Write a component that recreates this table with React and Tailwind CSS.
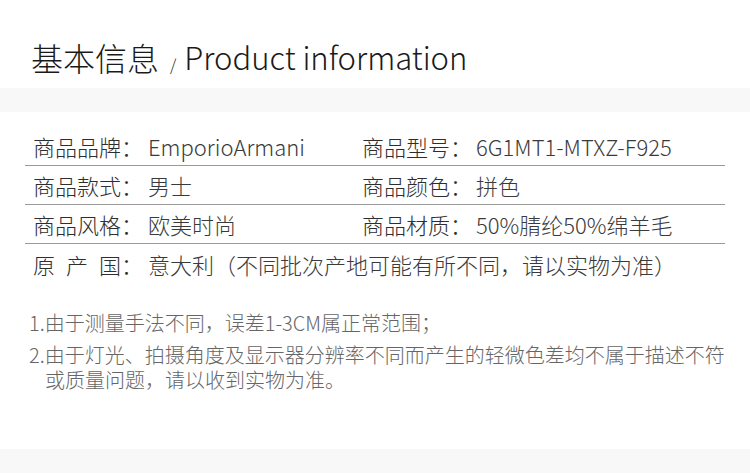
export default function App() {
  const font = "font-['Noto_Sans_CJK_SC','Noto_Sans',sans-serif]";
  const Row = ({ l1, v1, l2, v2, last }) => (
    <div className={`flex items-center h-[39px] ${last ? "" : "border-b border-[#9a9a9a]"}`}>
      <div className="flex items-center w-[337px] pl-[8px]">
        <span className="w-[115px] shrink-0">{l1}</span>
        <span className="text-[#3a3a3a]">{v1}</span>
      </div>
      <div className="flex items-center">
        <span className="w-[114px] shrink-0">{l2}</span>
        <span className="text-[#3a3a3a]">{v2}</span>
      </div>
    </div>
  );
  return (
    <div className={`w-[750px] h-[473px] bg-white overflow-hidden font-light ${font}`}>
      <div className="h-[88px] pt-[41px] pl-[31px] flex items-start text-[#1a1a1a] leading-[32px]">
        <span className="text-[32px]">基本信息</span>
        <span className="text-[16px] ml-[11px] mr-[8px] mt-[7px]">/</span>
        <span className="text-[31px]">Product information</span>
      </div>
      <div className="h-[24px] bg-[#f8f8f8]" />
      <div className="pt-[15px] mx-[25px] text-[22px] text-[#2e2e2e] leading-none">
        <Row l1="商品品牌：" v1="EmporioArmani" l2="商品型号：" v2="6G1MT1-MTXZ-F925" />
        <Row l1="商品款式：" v1="男士" l2="商品颜色：" v2="拼色" />
        <Row l1="商品风格：" v1="欧美时尚" l2="商品材质：" v2="50%腈纶50%绵羊毛" />
        <div className="flex items-center h-[39px] pl-[8px]">
          <span className="w-[115px] shrink-0 flex">
            <span className="w-[88px] flex justify-between">
              <span>原</span>
              <span>产</span>
              <span>国</span>
            </span>
            <span>：</span>
          </span>
          <span className="text-[#3a3a3a]">意大利（不同批次产地可能有所不同，请以实物为准）</span>
        </div>
      </div>
      <div className="h-[166px] pt-[27px] pl-[29px] text-[20px] leading-[25px] text-[#666]">
        <div className="whitespace-nowrap">1.由于测量手法不同，误差1-3CM属正常范围；</div>
        <div className="mt-[7px] whitespace-nowrap">
          2.由于灯光、拍摄角度及显示器分辨率不同而产生的轻微色差均不属于描述不符
        </div>
        <div className="pl-[16px] whitespace-nowrap">或质量问题，请以收到实物为准。</div>
      </div>
      <div className="h-[24px] bg-[#f8f8f8]" />
    </div>
  );
}
